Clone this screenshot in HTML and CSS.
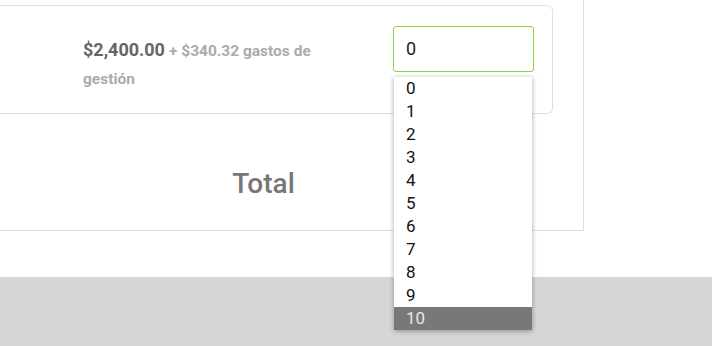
FILE: index.html
```html
<!DOCTYPE html>
<html lang="es">
<head>
  <meta charset="UTF-8">
  <title>Resumen de compra</title>
  <link rel="stylesheet" href="styles.css">
</head>
<body>
  <div class="page">
    <div class="panel">
      <div class="ticket-card">
        <div class="price">
          <span class="price-main">$2,400.00</span>
          <span class="price-fee">+ $340.32 gastos de gestión</span>
        </div>
        <div class="qty">
          <div class="qty-select">0</div>
          <ul class="qty-options">
            <li>0</li>
            <li>1</li>
            <li>2</li>
            <li>3</li>
            <li>4</li>
            <li>5</li>
            <li>6</li>
            <li>7</li>
            <li>8</li>
            <li>9</li>
            <li class="active">10</li>
          </ul>
        </div>
      </div>
      <div class="total-row">
        <h2 class="total-label">Total</h2>
      </div>
    </div>
  </div>
  <div class="footer"></div>
</body>
</html>
```

FILE: styles.css
```css
body {
  margin: 0;
  font-family: Roboto, 'Liberation Sans', sans-serif;
  background: #fff;
  color: #333;
}

.page {
  background: #fff;
  height: 277px;
  position: relative;
  z-index: 2;
}

.footer {
  background: #d6d6d6;
  height: 69px;
}

.panel {
  margin-left: -60px;
  width: 644px;
  height: 231px;
  padding: 5px 30px 0 0;
  box-sizing: border-box;
  border-right: 1px solid #e0e0e0;
  border-bottom: 1px solid #e0e0e0;
}

.ticket-card {
  display: flex;
  align-items: flex-start;
  height: 109px;
  box-sizing: border-box;
  border: 1px solid #e0e0e0;
  border-radius: 0 6px 6px 0;
  border-left: none;
  padding: 20px 0 0 143px;
}

.price {
  width: 250px;
  margin-top: 10px;
  line-height: 28px;
  font-weight: bold;
}

.price-main {
  font-size: 18px;
  color: #666;
}

.price-fee {
  font-size: 15.5px;
  color: #ababab;
}

.qty {
  position: relative;
  margin-left: 60px;
}

.qty-select {
  width: 141px;
  height: 46px;
  box-sizing: border-box;
  border: 1px solid #8cd44a;
  border-radius: 3px;
  padding-left: 12px;
  font-size: 18px;
  line-height: 44px;
  color: #222;
}

.qty-options {
  position: absolute;
  z-index: 10;
  top: 51px;
  left: 1px;
  width: 138px;
  margin: 0;
  padding: 0;
  list-style: none;
  background: #fff;
  box-shadow: 0 1px 5px rgba(0, 0, 0, 0.35);
}

.qty-options li {
  height: 23px;
  line-height: 23px;
  padding-left: 12px;
  font-size: 17px;
  color: #111;
}

.qty-options li.active {
  background: #787878;
  color: #e8e8e8;
}

.total-row {
  text-align: center;
  padding-left: 34px;
}

.total-label {
  margin: 54px 0 0 0;
  font-size: 28px;
  font-weight: 500;
  color: #777;
  line-height: 32px;
}
```
